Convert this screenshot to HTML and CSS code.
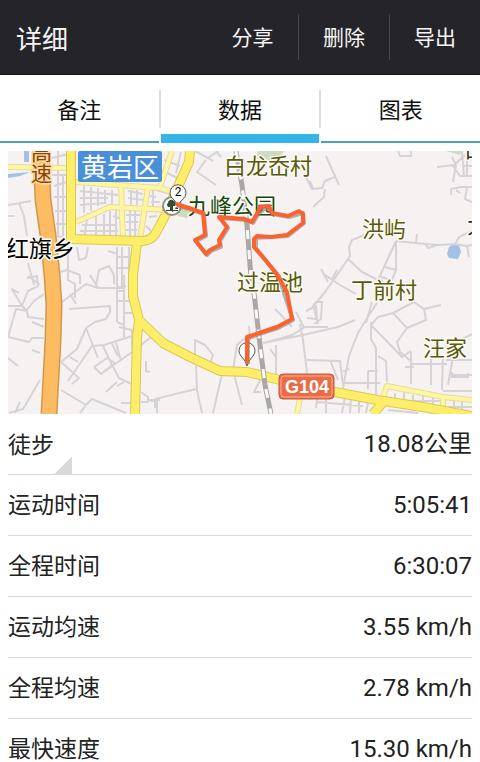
FILE: index.html
```html
<!DOCTYPE html>
<html lang="zh-CN">
<head>
    <meta charset="UTF-8">
    <meta name="viewport" content="width=device-width, initial-scale=1.0">
    <title>详细</title>
    <link rel="stylesheet" href="styles.css">
</head>
<body>
    <div class="app">
        <!-- Header -->
        <header class="header">
            <h1>详细</h1>
            <div class="actions">
                <button type="button" class="action-btn">分享</button>
                <button type="button" class="action-btn">删除</button>
                <button type="button" class="action-btn">导出</button>
            </div>
        </header>

        <!-- Tabs -->
        <nav class="tabs">
            <button type="button" class="tab">备注</button>
            <span class="tab-divider"></span>
            <button type="button" class="tab active">数据</button>
            <span class="tab-divider"></span>
            <button type="button" class="tab">图表</button>
        </nav>

        <main class="content">
            <!-- Map -->
            <svg class="map" viewBox="8 151 464 263" role="img" aria-label="路线地图">
                <rect class="land" x="8" y="151" width="464" height="263"/>

                <path class="park" d="M258 151H284L280 157L268 161L256 158Z M174 208L188 206L196 214L186 218L178 216Z M446 151H462L460 155Z"/>
                <path class="water" d="M24 151H29V162H24Z M8 174L30 172L20 176L8 178Z M449 247L453 244L459 245L461 252L458 259L449 258L447 254Z"/>

                <!-- Streets -->
                <g class="street">
                    <path d="M8 205L20 203L31 201M19 203L24 216L27 236M28 263L34 285M8 216H14"/>
                    <path d="M52 158L68 154M52 175H66M54 186L67 182M54 197H67M58 151V236M63 176V236M55 211H67M56 224H67M57 236L70 240"/>
                    <path d="M80 191L118 195M80 198H108M84 186V213M91 187V211M98 188V206M105 190V204M112 190V204M80 205L104 203M88 213L84 238M96 211V237M104 214V236M110 211V237M80 231H118M82 225H117M113 216L121 219M116 208V237"/>
                    <path d="M128 191L143 194M128 198L143 200M131 190V205M137 190V205M126 215H140M126 222H138M126 230H137M130 210V238M135 211V238M150 196L156 197M151 202H160M149 217L157 216M146 226L151 231M153 190V208"/>
                    <path d="M96 151L94 158M170 151V160L163 177M181 152L176 173M164 160L180 166M164 171L177 178M156 190L171 194"/>
                    <path d="M195 151L208 158L218 151M208 158L213 161M206 160L197 172L216 185M216 151L221 157"/>
                    <path d="M68 247V280L75 284V298M77 247L79 260L86 258L88 247M57 273L67 270L80 275M96 285L99 270L109 266L114 275V284M117 247V287L126 286M122 247V286M129 247V283M117 257H130M117 268H130M108 251L118 254"/>
                    <path d="M27 278L37 276L38 286L28 291L22 306L8 306M19 293L12 289L22 306M28 276L40 285M26 311L34 301L44 294M27 311L28 317L44 319M32 322L44 327M22 306L27 311L16 309L8 337L29 342L32 338H44"/>
                    <path d="M8 358L18 366M32 350L40 353M40 380L23 409L9 413M20 402L15 413M62 302L86 284L98 288H125M70 294L76 304M80 275V284M90 275L98 288M117 275V322M124 275V337M117 291H125M117 301H131M117 322L124 325"/>
                    <path d="M69 309L110 306V312L106 319L95 322L86 328L77 349L61 362M86 328L98 358M61 362L79 378L72 384M70 357L78 362M68 381L92 346L104 345L132 336M103 346L111 363M112 344L118 356M116 343L121 361M94 367L107 358L115 363L101 374L94 367M101 374L135 350L151 337M111 363L119 378L140 388M117 382L106 392M124 382L117 386"/>
                    <path d="M61 390L86 405L92 399L126 413M86 405L80 413M121 403H133M141 392L148 397V402H141M148 400H160M157 401V413M146 361V371L150 372M119 327L132 330V350M125 313H132"/>
                    <path d="M150 401H155V408M155 399L196 389M195 364V340L205 345L213 355L209 367M196 366L197 390L202 413M222 374L213 413M233 370L237 345L245 338M233 370L242 405M249 326L250 340M258 349L263 375L254 392L261 392M276 345V375M270 349L276 357M264 343L292 335L305 327H328M263 343L303 335L338 327L355 320M300 324L303 340L307 373M275 309L281 315L292 327M296 312L304 328M306 311L316 306L317 319L307 318M307 360L340 361L343 385M330 360L338 380"/>
                    <path d="M326 156L339 185M335 177L325 181L322 188L312 189L305 175M325 189L324 197L313 207M310 181L313 189M398 151L400 156H411V151M465 155L454 165L437 167M452 157L456 165L453 182M453 166L460 176H472M462 151L464 176M463 166H472M467 160V176M451 195V189L461 187H472M456 190L460 193M467 187L465 199L472 202"/>
                    <path d="M396 241L425 244L439 245L455 244L466 246L472 245M455 244L459 237L472 231M417 234L416 243M425 244L428 248L437 245M467 246L469 257M365 235L352 240L349 247L350 256L337 275L325 292L312 308M348 259L362 272L380 281M396 241L379 278L388 287M396 241V270L391 282M385 267L396 270M381 277L391 280M321 269L328 282M337 270L332 279M325 275L340 285L356 294"/>
                    <path d="M312 308L316 302H322L321 319L314 324M313 305L318 324M377 303L364 323L358 333L349 356L343 388M372 302L366 323M371 322L371 339L376 348V408M371 325L402 357L411 351M371 325L378 317L393 313L414 302L424 309L441 305M393 313L407 328L397 342L400 352L411 361M424 309L426 320L407 328M378 356L386 361L387 382M411 352V384M411 364H447M405 367H414M431 358V385M443 356L442 390M453 375H472M452 372V377H468V373M448 385L454 351M446 360H472M368 371V389M368 371H378M342 383H380M349 369L343 371M461 340L472 334"/>
                    <path d="M318 392L316 408M326 391V413M334 396L346 394M345 397L342 413M351 398L350 413M359 399V413M368 403L366 413M317 402L363 406M395 393V406M404 391V408M413 395V411M423 396V411M433 396V410M454 400V413M462 400V413M404 401H442M448 407H472M443 391H472M388 410L418 413"/>
                </g>

                <!-- Side roads -->
                <g class="road-edge">
                    <path id="side" d="M8 167L68 168M76 182L160 188L176 193M76 222L110 207L171 210M121 185L123 239M148 187L140 239M172 151L160 187M300 398L297 414M382 399L387 386L443 397L472 400M443 398V410"/>
                </g>
                <use href="#side" class="road-minor"/>

                <!-- Main roads -->
                <g class="main-edge">
                    <path id="main" d="M71 151V239L143 241Q153 240 157 231L167 212L180 182L189 162L190 151M137 243L133 275V296L139 320L163 343L190 357L220 371L247 372L280 380L335 392L377 400L423 407L472 416M139 320L137 337L135 414M383 402L373 414"/>
                </g>
                <use href="#main" class="road-main"/>

                <path class="highway-edge" d="M41 151L43 200L48 235L52 275L54 305L53 340L49 414"/>
                <path class="highway" d="M41 151L43 200L48 235L52 275L54 305L53 340L49 414"/>

                <!-- Railway -->
                <path class="rail" d="M236 151L242 185L247 225L251 278L254 293L260 345L265 385L271 414"/>
                <path class="rail-dash" d="M236 151L242 185L247 225L251 278L254 293L260 345L265 385L271 414"/>

                <!-- Place names -->
                <text class="label highway-label" x="31" y="160">高</text>
                <text class="label highway-label" x="31" y="181">速</text>
                <rect class="district-box" x="78" y="151" width="84" height="31" rx="2"/>
                <text class="district" x="81" y="177">黄岩区</text>
                <text class="label town" x="6" y="257">红旗乡</text>
                <text class="label village" x="224" y="174">白龙岙村</text>
                <text class="label village" x="237" y="290">过温池</text>
                <text class="label village" x="362" y="237">洪屿</text>
                <text class="label village" x="351" y="298">丁前村</text>
                <text class="label village" x="423" y="356">汪家</text>
                <text class="label village dark" x="465" y="163">中</text>
                <text class="label village dark" x="467" y="233">大</text>
                <text class="label village park-name" x="188" y="214">九峰公园</text>

                <rect class="badge" x="279" y="374" width="55" height="25" rx="4"/>
                <rect class="badge-line" x="281" y="376" width="51" height="21" rx="3"/>
                <text class="badge-text" x="307" y="393">G104</text>

                <!-- Park icon -->
                <circle class="park-ring" cx="172" cy="206" r="9"/>
                <path class="park-tree" d="M170 200Q172 199 174 201Q177 203 175 206H173V210H178V211H174L172 212V211H166V210H170V207H168Q166 204 168 203Q168 201 170 200Z M176 207L178 208V209H175Z"/>

                <!-- End pins -->
                <path class="pin" d="M178 207Q177 202 173 199A8 8 0 1 1 183 199Q179 202 178 207Z"/>
                <text class="pin-text" x="178" y="196">2</text>
                <path class="pin" d="M247 366Q246 361 241 356A8 8 0 1 1 253 356Q248 361 247 366Z"/>

                <!-- Track -->
                <path class="track-shadow" d="M178 206L190 209L204 214L206 236L196 241L207 255L211 251L221 247L220 241L228 228L220 218L246 220L253 223L259 213L266 208L273 214L289 217L303 213L304 223L288 236L256 238L256 248L268 263L279 276L284 293L293 320L278 328L248 338V364"/>
                <path class="track" d="M176 204L189 208L203 213L205 235L195 240L206 254L210 250L220 245L219 240L227 227L219 217L245 219L252 222L258 212L260 207L269 206L272 213L288 216L299 211L303 214L303 223L287 235L271 237L257 236L254 239L254 247L267 262L278 276L287 292L292 319L277 327L247 337V363"/>
            </svg>

            <!-- Stats -->
            <table class="stats">
                <tbody>
                    <tr>
                        <th scope="row">
                            <div class="sport">
                                <select class="sport-select" aria-label="运动类型">
                                    <option>徒步</option>
                                </select>
                            </div>
                        </th>
                        <td>18.08公里</td>
                    </tr>
                    <tr>
                        <th scope="row">运动时间</th>
                        <td>5:05:41</td>
                    </tr>
                    <tr>
                        <th scope="row">全程时间</th>
                        <td>6:30:07</td>
                    </tr>
                    <tr>
                        <th scope="row">运动均速</th>
                        <td>3.55 km/h</td>
                    </tr>
                    <tr>
                        <th scope="row">全程均速</th>
                        <td>2.78 km/h</td>
                    </tr>
                    <tr>
                        <th scope="row">最快速度</th>
                        <td>15.30 km/h</td>
                    </tr>
                </tbody>
            </table>
        </main>
    </div>
</body>
</html>
```
FILE: styles.css
```css
* {
    margin: 0;
    padding: 0;
    box-sizing: border-box;
}

body {
    font-family: Roboto, "Noto Sans CJK SC", sans-serif;
    background: white;
    color: #222;
}

button,
select {
    font-family: inherit;
    border: none;
    background: none;
    cursor: pointer;
}

.app {
    display: flex;
    flex-direction: column;
    height: 100vh;
}

/* Header */
.header {
    display: flex;
    justify-content: space-between;
    align-items: center;
    height: 75px;
    padding-left: 16px;
    background: #252428;
    border-bottom: 1px solid #151417;
    color: #f4f4f4;
    flex-shrink: 0;
}

.header h1 {
    font-size: 26px;
    font-weight: normal;
}

.actions {
    display: flex;
}

.action-btn {
    width: 91px;
    height: 46px;
    padding-bottom: 2px;
    color: #f4f4f4;
    font-size: 21px;
}

.action-btn + .action-btn {
    border-left: 1px solid #4a4549;
}

/* Tabs */
.tabs {
    display: flex;
    height: 68px;
    flex-shrink: 0;
}

.tab {
    flex: 1;
    border-bottom: 2px solid #4f9fb5;
    color: #111;
    font-size: 22px;
}

.tab.active {
    padding-top: 7px;
    border-bottom: 9px solid #33b5e5;
}

.tab-divider {
    width: 2px;
    height: 38px;
    margin-top: 15px;
    background: #ddd;
}

.content {
    flex: 1;
    min-height: 0;
    padding: 8px 8px 0;
    overflow-y: auto;
    scrollbar-width: none;
}

/* Map */
.map {
    display: block;
    width: 100%;
    height: auto;
}

.map path {
    stroke-linejoin: round;
}

.land {
    fill: #f6f2f1;
}

.park {
    fill: #cbdcbf;
}

.water {
    fill: #a3c0e6;
}

.street {
    fill: none;
    stroke: #d6d2d8;
    stroke-width: 2;
}

.road-edge {
    fill: none;
    stroke: #e6dc9a;
    stroke-width: 6;
}

.road-minor {
    fill: none;
    stroke: #fff6a0;
    stroke-width: 4;
}

.main-edge {
    fill: none;
    stroke: #dcc65c;
    stroke-width: 10;
}

.road-main {
    fill: none;
    stroke: #fdee68;
    stroke-width: 8;
}

.highway-edge {
    fill: none;
    stroke: #d2974e;
    stroke-width: 17;
}

.highway {
    fill: none;
    stroke: #fdbb62;
    stroke-width: 14;
}

.rail {
    fill: none;
    stroke: #a9a8a6;
    stroke-width: 5;
}

.rail-dash {
    fill: none;
    stroke: #fafafa;
    stroke-width: 3;
    stroke-dasharray: 9 11;
}

.label {
    font-family: "Noto Sans CJK SC", sans-serif;
    paint-order: stroke;
    stroke: #fbfaf5;
    stroke-width: 3;
    stroke-linejoin: round;
}

.village {
    font-size: 22px;
    fill: #5b5b0c;
}

.village.park-name {
    fill: #17480f;
}

.village.dark {
    fill: #333;
}

.town {
    font-size: 23px;
    fill: #000;
}

.highway-label {
    font-size: 21px;
    fill: #8a4308;
    stroke: #fdd9a0;
}

.district-box {
    fill: #4a90d9;
}

.district {
    font-size: 26px;
    fill: white;
}

.badge {
    fill: #ea6b46;
    stroke: #c9583a;
}

.badge-line {
    fill: none;
    stroke: #f8b7a0;
}

.badge-text {
    font-family: "Liberation Sans", sans-serif;
    font-size: 18px;
    font-weight: bold;
    text-anchor: middle;
    fill: white;
}

.park-ring {
    fill: #fafafa;
    stroke: #8b8f86;
    stroke-width: 2;
}

.park-tree {
    fill: #35502f;
}

.pin {
    fill: white;
    stroke: #555;
}

.pin-text {
    font-size: 12px;
    text-anchor: middle;
    fill: #000;
}

.track-shadow {
    fill: none;
    stroke: #8c7a74;
    stroke-opacity: 0.6;
    stroke-width: 4;
}

.track {
    fill: none;
    stroke: #fb6230;
    stroke-width: 4;
}

/* Stats */
.stats {
    width: 100%;
    border-spacing: 0;
}

.stats th,
.stats td {
    height: 61px;
    border-bottom: 1px solid #d9d9d9;
    line-height: 30px;
}

.stats th {
    padding-top: 2px;
    text-align: left;
    font-size: 23px;
    font-weight: normal;
}

.stats td {
    text-align: right;
    font-size: 24px;
}

/* Spinner with a corner triangle */
.sport {
    width: 64px;
    background: linear-gradient(135deg, transparent 50%, #d9d9d9 50%) right bottom / 18px 18px no-repeat;
}

.sport-select {
    display: block;
    width: 100%;
    height: 58px;
    appearance: none;
    color: #222;
    font-size: 23px;
}
```
